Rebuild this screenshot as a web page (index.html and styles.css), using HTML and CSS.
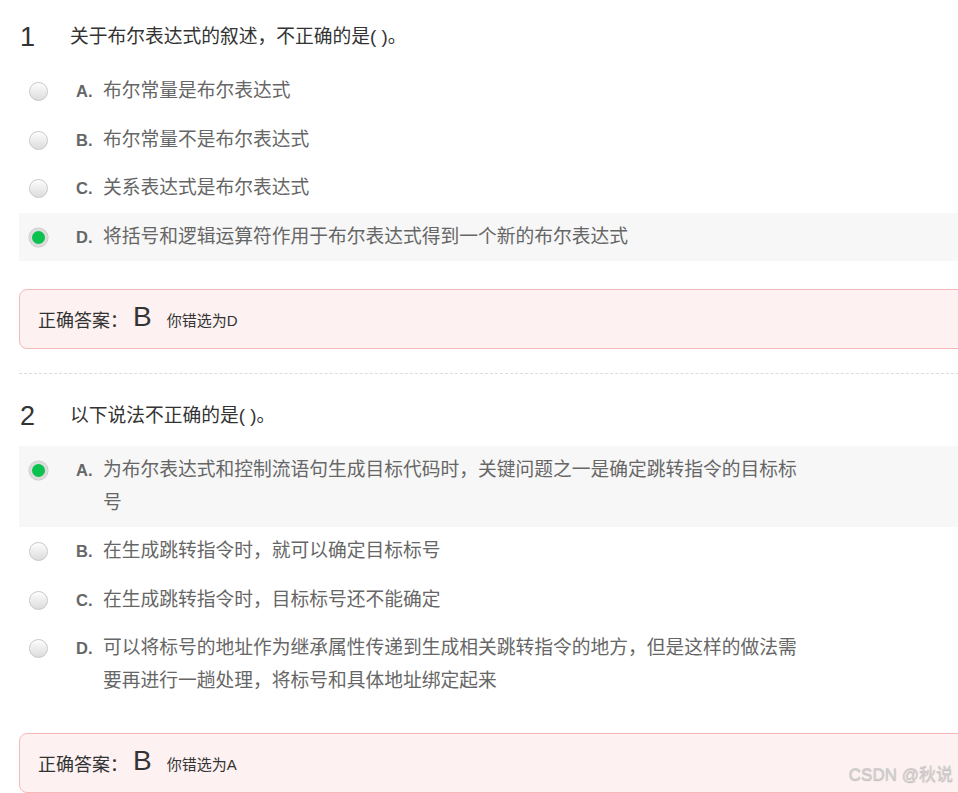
FILE: index.html
```html
<!DOCTYPE html>
<html lang="zh">
<head>
<meta charset="utf-8">
<link rel="stylesheet" href="styles.css">
</head>
<body>
<div class="frame">
<div class="page">
  <section class="question">
    <div class="q-title"><span class="q-num">1</span><span class="q-text">关于布尔表达式的叙述，不正确的是( )。</span></div>
    <ul class="options">
      <li class="opt"><span class="radio"></span><span class="letter">A.</span><span class="opt-text">布尔常量是布尔表达式</span></li>
      <li class="opt"><span class="radio"></span><span class="letter">B.</span><span class="opt-text">布尔常量不是布尔表达式</span></li>
      <li class="opt"><span class="radio"></span><span class="letter">C.</span><span class="opt-text">关系表达式是布尔表达式</span></li>
      <li class="opt selected"><span class="radio checked"></span><span class="letter">D.</span><span class="opt-text">将括号和逻辑运算符作用于布尔表达式得到一个新的布尔表达式</span></li>
    </ul>
    <div class="answer"><span class="ans-label">正确答案：</span><span class="ans-key">B</span><span class="ans-wrong">你错选为D</span></div>
  </section>
  <hr class="divider">
  <section class="question">
    <div class="q-title"><span class="q-num">2</span><span class="q-text">以下说法不正确的是( )。</span></div>
    <ul class="options">
      <li class="opt selected"><span class="radio checked"></span><span class="letter">A.</span><span class="opt-text">为布尔表达式和控制流语句生成目标代码时，关键问题之一是确定跳转指令的目标标号</span></li>
      <li class="opt"><span class="radio"></span><span class="letter">B.</span><span class="opt-text">在生成跳转指令时，就可以确定目标标号</span></li>
      <li class="opt"><span class="radio"></span><span class="letter">C.</span><span class="opt-text">在生成跳转指令时，目标标号还不能确定</span></li>
      <li class="opt"><span class="radio"></span><span class="letter">D.</span><span class="opt-text">可以将标号的地址作为继承属性传递到生成相关跳转指令的地方，但是这样的做法需要再进行一趟处理，将标号和具体地址绑定起来</span></li>
    </ul>
    <div class="answer"><span class="ans-label">正确答案：</span><span class="ans-key">B</span><span class="ans-wrong">你错选为A</span></div>
  </section>
</div>
</div>
<div class="watermark">CSDN @秋说</div>
</body>
</html>
```

FILE: styles.css
```css
html, body {
  margin: 0;
  padding: 0;
  background: #fff;
}
body {
  font-family: "Liberation Sans", "Noto Sans CJK SC", sans-serif;
  color: #333;
  position: relative;
  width: 958px;
  height: 793px;
  overflow: hidden;
}
.frame {
  width: 958px;
  height: 793px;
  overflow: hidden;
}
.page {
  padding: 21px 0 0 19px;
  width: 950px;
}
.q-title {
  display: flex;
  align-items: center;
  height: 32px;
}
.q-num {
  width: 51px;
  font-size: 27px;
  color: #333;
  line-height: 32px;
  padding-left: 1px;
  box-sizing: border-box;
}
.q-text {
  font-size: 18.75px;
  color: #333;
  line-height: 32px;
}
.options {
  list-style: none;
  margin: 14px 0 0 0;
  padding: 0;
}
.opt {
  display: flex;
  align-items: flex-start;
  padding: 8px 0 8px 10px;
  line-height: 32.5px;
  font-size: 18.75px;
  color: #666;
}
.opt.selected {
  background: #f7f7f7;
}
.radio {
  flex: none;
  width: 17px;
  height: 17px;
  border-radius: 50%;
  border: 1px solid #c8c8c8;
  background: linear-gradient(#fdfdfd, #dcdcdc);
  box-shadow: inset 0 1px 1px rgba(255,255,255,0.8);
  margin-top: 7px;
}
.radio.checked {
  width: 13px;
  height: 13px;
  border: 3px solid #dcdcdc;
  background: #0ac24d;
  box-shadow: 0 0 0 0.5px #c4c4c4;
}
.letter {
  flex: none;
  width: 27px;
  margin-left: 28px;
  font-family: "Liberation Sans", sans-serif;
  font-weight: bold;
  font-size: 16.5px;
  color: #666;
}
.opt-text {
  max-width: 702px;
}
.answer {
  margin-top: 28px;
  height: 58px;
  display: flex;
  align-items: center;
  padding-left: 18px;
  border: 1px solid #f4b9b9;
  border-radius: 8px;
  background: #fdf1f1;
  color: #333;
}
.ans-label {
  font-size: 18px;
}
.ans-key {
  font-size: 28px;
  margin: 0 15px 0 5px;
  position: relative;
  top: -2px;
}
.ans-wrong {
  font-size: 15px;
}
.divider {
  border: none;
  border-top: 1px dashed #dcdcdc;
  margin: 24px 0 26px 0;
}
.watermark {
  position: absolute;
  right: 5px;
  bottom: 8px;
  font-size: 17px;
  color: #d0d0d0;
  text-shadow: 0 1px 1px rgba(0,0,0,0.25);
  font-family: "Liberation Sans", "Noto Sans CJK SC", sans-serif;
}
```
